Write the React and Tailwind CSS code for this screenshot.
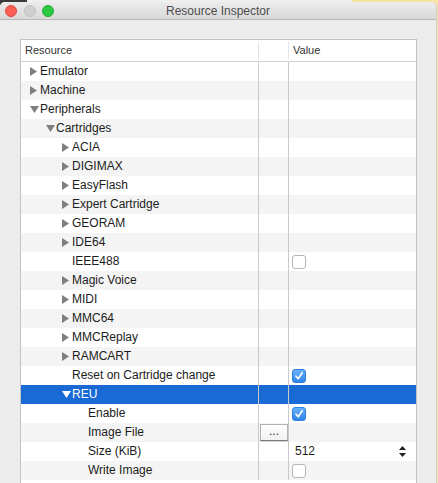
const ROWS = [
  { label: 'Emulator', level: 0, node: 'closed' },
  { label: 'Machine', level: 0, node: 'closed' },
  { label: 'Peripherals', level: 0, node: 'open' },
  { label: 'Cartridges', level: 1, node: 'open' },
  { label: 'ACIA', level: 2, node: 'closed' },
  { label: 'DIGIMAX', level: 2, node: 'closed' },
  { label: 'EasyFlash', level: 2, node: 'closed' },
  { label: 'Expert Cartridge', level: 2, node: 'closed' },
  { label: 'GEORAM', level: 2, node: 'closed' },
  { label: 'IDE64', level: 2, node: 'closed' },
  { label: 'IEEE488', level: 2, value: 'unchecked' },
  { label: 'Magic Voice', level: 2, node: 'closed' },
  { label: 'MIDI', level: 2, node: 'closed' },
  { label: 'MMC64', level: 2, node: 'closed' },
  { label: 'MMCReplay', level: 2, node: 'closed' },
  { label: 'RAMCART', level: 2, node: 'closed' },
  { label: 'Reset on Cartridge change', level: 2, value: 'checked' },
  { label: 'REU', level: 2, node: 'open', selected: true },
  { label: 'Enable', level: 3, value: 'checked' },
  { label: 'Image File', level: 3, button: true },
  { label: 'Size (KiB)', level: 3, value: 'stepper', text: '512' },
  { label: 'Write Image', level: 3, value: 'unchecked' },
];

function Disclosure({ node, selected }) {
  const fill = selected ? '#ffffff' : '#7f7f7f';
  if (node === 'closed') {
    return (
      <svg width="7" height="9" viewBox="0 0 7 9" className="block">
        <polygon points="0,0 7,4.5 0,9" fill={fill} />
      </svg>
    );
  }
  if (node === 'open') {
    return (
      <svg width="9" height="7" viewBox="0 0 9 7" className="block">
        <polygon points="0,0 9,0 4.5,7" fill={fill} />
      </svg>
    );
  }
  return null;
}

function Checkbox({ checked }) {
  if (checked) {
    return (
      <div className="w-[14px] h-[14px] rounded-[3px] bg-gradient-to-b from-[#68b1fa] to-[#2d84ec] border border-[#2f7fe0] flex items-center justify-center">
        <svg width="10" height="10" viewBox="0 0 10 10">
          <path d="M2 5.2 L4.2 7.8 L8.2 1.8" fill="none" stroke="#fff" strokeWidth="1.6" strokeLinecap="round" strokeLinejoin="round" />
        </svg>
      </div>
    );
  }
  return <div className="w-[14px] h-[14px] rounded-[3px] bg-white border border-[#b5b5b5]" />;
}

function Row({ row, index }) {
  const bg = row.selected ? 'bg-[#1a6ad5]' : index % 2 === 1 ? 'bg-[#f4f4f4]' : 'bg-white';
  const color = row.selected ? 'text-white' : 'text-[#1c1c1c]';
  return (
    <div className={`flex h-[19px] ${bg} ${color}`}>
      <div className="w-[237px] flex items-center" style={{ paddingLeft: 9 + row.level * 16 }}>
        <div className="w-[10px] flex items-center">
          <Disclosure node={row.node} selected={row.selected} />
        </div>
        <span className="whitespace-nowrap pb-[2px]">{row.label}</span>
      </div>
      <div className="w-[30px] border-l border-[#c9c9c9] flex items-center">
        {row.button && (
          <div className="ml-[1px] w-[28px] h-[17px] bg-gradient-to-b from-white to-[#f1f1f1] border border-[#b1b1b1] border-b-[#7a7a7a] shadow-[0_1px_0_#d5d5d5] flex items-center justify-center text-[12px] leading-none pb-[4px] text-[#333]">
            ...
          </div>
        )}
      </div>
      <div className="flex-1 border-l border-[#c9c9c9] flex items-center pl-[3px] pr-[10px]">
        {row.value === 'checked' && <Checkbox checked />}
        {row.value === 'unchecked' && <Checkbox />}
        {row.value === 'stepper' && (
          <div className="flex-1 flex items-center justify-between pl-[3px]">
            <span className="pb-[1px]">{row.text}</span>
            <svg width="7" height="11" viewBox="0 0 7 11">
              <polygon points="3.5,0 7,4 0,4" fill="#222" />
              <polygon points="0,7 7,7 3.5,11" fill="#222" />
            </svg>
          </div>
        )}
      </div>
    </div>
  );
}

export default function App() {
  return (
    <div
      className="w-[438px] h-[483px] overflow-hidden bg-[linear-gradient(to_right,#3b3b3b_27px,#efefef_27px,#efefef_352px,#f5e4a3_352px)]"
      style={{ fontFamily: '"Liberation Sans", Arial, sans-serif' }}
    >
      <div className="mt-[2px] w-[437px] h-[481px] rounded-t-[5px] bg-[#ececec] flex flex-col border-r border-[#d0d0d0]">
        {/* title bar */}
        <div className="relative h-[18px] rounded-t-[5px] bg-gradient-to-b from-[#ececec] to-[#d9d9d9] border-b border-[#b9b9b9] flex items-center justify-center">
          <div className="absolute left-[5px] top-[3px] flex gap-[7px]">
            <div className="w-[12px] h-[12px] rounded-full bg-[#fc5f57] border border-[#e0443e]" />
            <div className="w-[12px] h-[12px] rounded-full bg-[#d0d0d0] border border-[#c2c2c2]" />
            <div className="w-[12px] h-[12px] rounded-full bg-[#2cc940] border border-[#22aa33] -ml-[1px]" />
          </div>
          <span className="text-[12px] text-[#4d4d4d] leading-none pt-[1px]">Resource Inspector</span>
        </div>

        {/* table */}
        <div className="mt-[19px] ml-[20px] w-[397px] flex-1 border border-b-0 border-[#c2c2c2] bg-white text-[12px] overflow-hidden">
          <div className="flex h-[22px] border-b border-[#d2d2d2] text-[11px] text-[#333]">
            <div className="w-[237px] flex items-center pl-[4px]">Resource</div>
            <div className="w-[30px] my-[2px] border-l border-[#e4e4e4]" />
            <div className="flex-1 my-[2px] border-l border-[#e4e4e4] flex items-center pl-[4px]">Value</div>
          </div>
          {ROWS.map((row, i) => (
            <Row key={row.label} row={row} index={i} />
          ))}
        </div>
      </div>
    </div>
  );
}
